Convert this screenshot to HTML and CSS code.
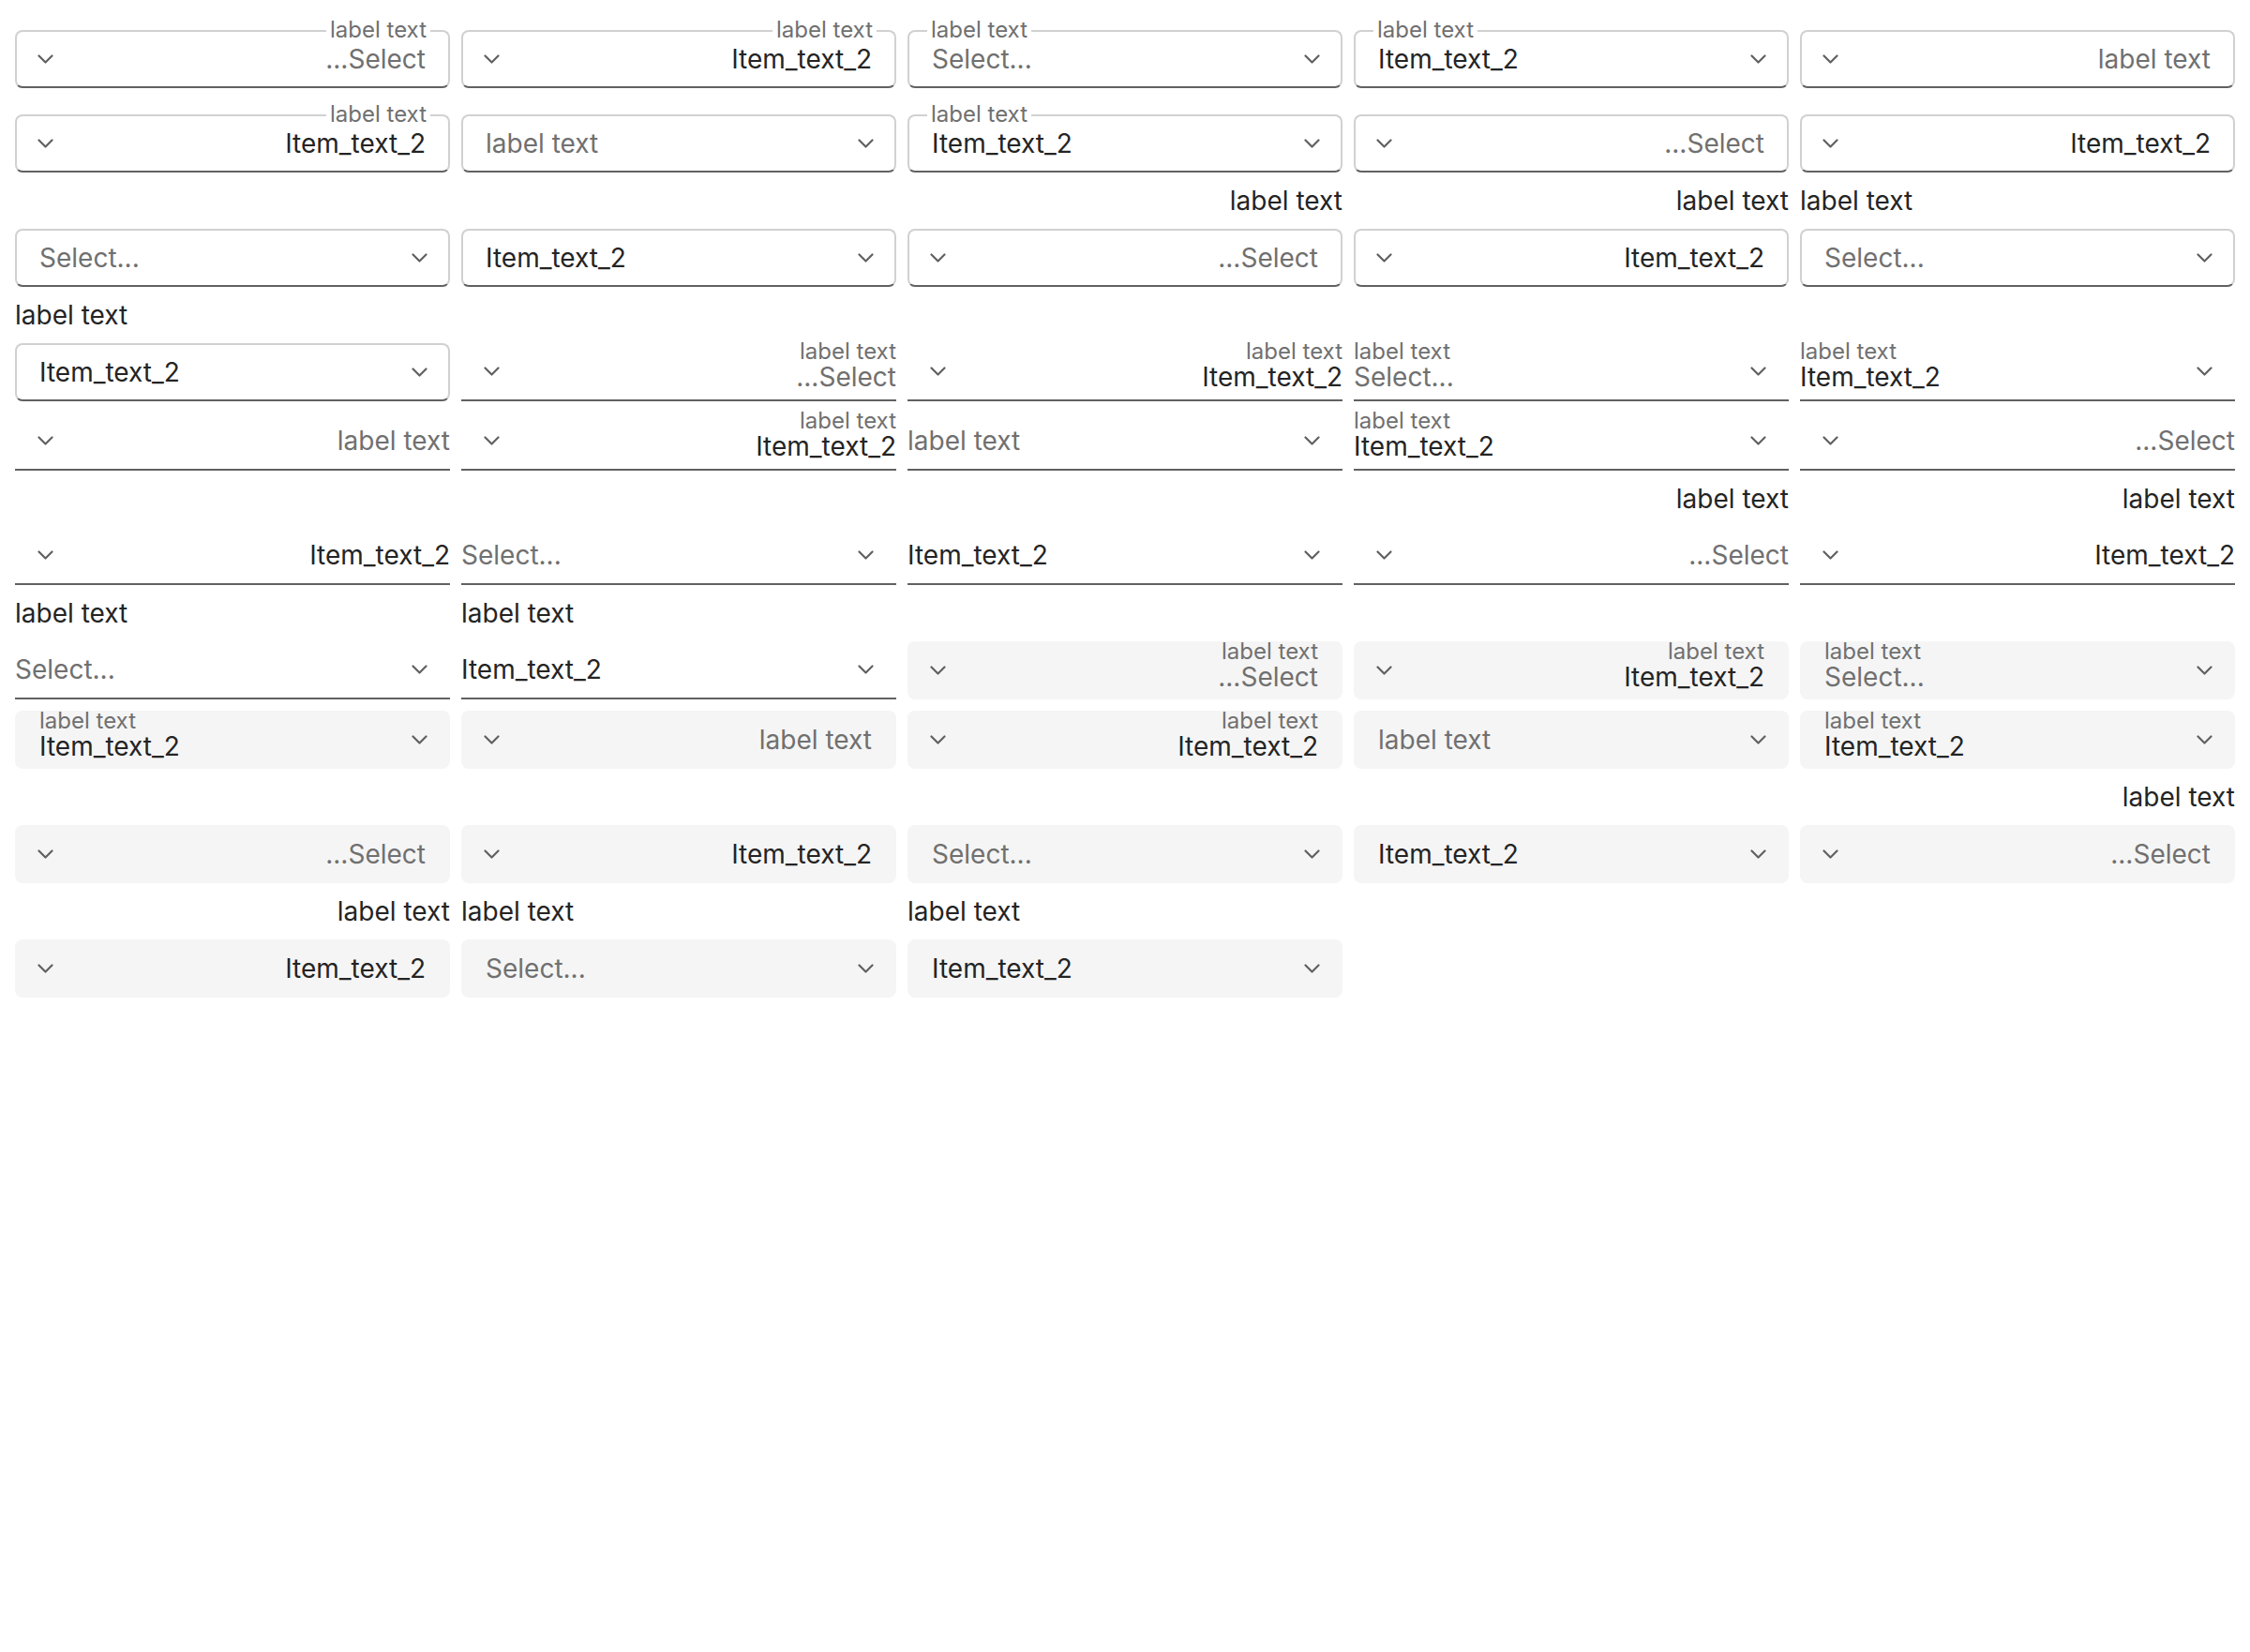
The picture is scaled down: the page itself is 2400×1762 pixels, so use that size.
FILE: index.html
```html
<!DOCTYPE html>
<html lang="en">
<head>
    <meta charset="UTF-8">
    <meta name="viewport" content="width=device-width, initial-scale=1.0">
    <title>Dropdown variants</title>
    <link rel="stylesheet" href="styles.css">
</head>
<body>
    <div class="grid">
        <!-- outline -->
        <div class="field rtl notched">
            <div class="dropdown outline">
                <span class="legend">label text</span>
                <span class="value placeholder">Select...</span>
                <svg class="chevron" width="17" height="10" viewBox="0 0 17 10"><path d="M1.5 1.5l7 7 7-7"/></svg>
            </div>
        </div>
        <div class="field rtl notched">
            <div class="dropdown outline">
                <span class="legend">label text</span>
                <span class="value">Item_text_2</span>
                <svg class="chevron" width="17" height="10" viewBox="0 0 17 10"><path d="M1.5 1.5l7 7 7-7"/></svg>
            </div>
        </div>
        <div class="field notched">
            <div class="dropdown outline">
                <span class="legend">label text</span>
                <span class="value placeholder">Select...</span>
                <svg class="chevron" width="17" height="10" viewBox="0 0 17 10"><path d="M1.5 1.5l7 7 7-7"/></svg>
            </div>
        </div>
        <div class="field notched">
            <div class="dropdown outline">
                <span class="legend">label text</span>
                <span class="value">Item_text_2</span>
                <svg class="chevron" width="17" height="10" viewBox="0 0 17 10"><path d="M1.5 1.5l7 7 7-7"/></svg>
            </div>
        </div>
        <div class="field rtl">
            <div class="dropdown outline">
                <span class="value placeholder">label text</span>
                <svg class="chevron" width="17" height="10" viewBox="0 0 17 10"><path d="M1.5 1.5l7 7 7-7"/></svg>
            </div>
        </div>
        <div class="field rtl notched">
            <div class="dropdown outline">
                <span class="legend">label text</span>
                <span class="value">Item_text_2</span>
                <svg class="chevron" width="17" height="10" viewBox="0 0 17 10"><path d="M1.5 1.5l7 7 7-7"/></svg>
            </div>
        </div>
        <div class="field">
            <div class="dropdown outline">
                <span class="value placeholder">label text</span>
                <svg class="chevron" width="17" height="10" viewBox="0 0 17 10"><path d="M1.5 1.5l7 7 7-7"/></svg>
            </div>
        </div>
        <div class="field notched">
            <div class="dropdown outline">
                <span class="legend">label text</span>
                <span class="value">Item_text_2</span>
                <svg class="chevron" width="17" height="10" viewBox="0 0 17 10"><path d="M1.5 1.5l7 7 7-7"/></svg>
            </div>
        </div>
        <div class="field rtl">
            <div class="dropdown outline">
                <span class="value placeholder">Select...</span>
                <svg class="chevron" width="17" height="10" viewBox="0 0 17 10"><path d="M1.5 1.5l7 7 7-7"/></svg>
            </div>
        </div>
        <div class="field rtl">
            <div class="dropdown outline">
                <span class="value">Item_text_2</span>
                <svg class="chevron" width="17" height="10" viewBox="0 0 17 10"><path d="M1.5 1.5l7 7 7-7"/></svg>
            </div>
        </div>
        <div class="field">
            <div class="dropdown outline">
                <span class="value placeholder">Select...</span>
                <svg class="chevron" width="17" height="10" viewBox="0 0 17 10"><path d="M1.5 1.5l7 7 7-7"/></svg>
            </div>
        </div>
        <div class="field">
            <div class="dropdown outline">
                <span class="value">Item_text_2</span>
                <svg class="chevron" width="17" height="10" viewBox="0 0 17 10"><path d="M1.5 1.5l7 7 7-7"/></svg>
            </div>
        </div>
        <div class="field rtl">
            <label class="top_label">label text</label>
            <div class="dropdown outline">
                <span class="value placeholder">Select...</span>
                <svg class="chevron" width="17" height="10" viewBox="0 0 17 10"><path d="M1.5 1.5l7 7 7-7"/></svg>
            </div>
        </div>
        <div class="field rtl">
            <label class="top_label">label text</label>
            <div class="dropdown outline">
                <span class="value">Item_text_2</span>
                <svg class="chevron" width="17" height="10" viewBox="0 0 17 10"><path d="M1.5 1.5l7 7 7-7"/></svg>
            </div>
        </div>
        <div class="field">
            <label class="top_label">label text</label>
            <div class="dropdown outline">
                <span class="value placeholder">Select...</span>
                <svg class="chevron" width="17" height="10" viewBox="0 0 17 10"><path d="M1.5 1.5l7 7 7-7"/></svg>
            </div>
        </div>
        <div class="field">
            <label class="top_label">label text</label>
            <div class="dropdown outline">
                <span class="value">Item_text_2</span>
                <svg class="chevron" width="17" height="10" viewBox="0 0 17 10"><path d="M1.5 1.5l7 7 7-7"/></svg>
            </div>
        </div>

        <!-- underline -->
        <div class="field rtl">
            <div class="dropdown underline">
                <span class="stack"><span class="stack_label">label text</span><span class="value placeholder">Select...</span></span>
                <svg class="chevron" width="17" height="10" viewBox="0 0 17 10"><path d="M1.5 1.5l7 7 7-7"/></svg>
            </div>
        </div>
        <div class="field rtl">
            <div class="dropdown underline">
                <span class="stack"><span class="stack_label">label text</span><span class="value">Item_text_2</span></span>
                <svg class="chevron" width="17" height="10" viewBox="0 0 17 10"><path d="M1.5 1.5l7 7 7-7"/></svg>
            </div>
        </div>
        <div class="field">
            <div class="dropdown underline">
                <span class="stack"><span class="stack_label">label text</span><span class="value placeholder">Select...</span></span>
                <svg class="chevron" width="17" height="10" viewBox="0 0 17 10"><path d="M1.5 1.5l7 7 7-7"/></svg>
            </div>
        </div>
        <div class="field">
            <div class="dropdown underline">
                <span class="stack"><span class="stack_label">label text</span><span class="value">Item_text_2</span></span>
                <svg class="chevron" width="17" height="10" viewBox="0 0 17 10"><path d="M1.5 1.5l7 7 7-7"/></svg>
            </div>
        </div>
        <div class="field rtl">
            <div class="dropdown underline">
                <span class="value placeholder">label text</span>
                <svg class="chevron" width="17" height="10" viewBox="0 0 17 10"><path d="M1.5 1.5l7 7 7-7"/></svg>
            </div>
        </div>
        <div class="field rtl">
            <div class="dropdown underline">
                <span class="stack"><span class="stack_label">label text</span><span class="value">Item_text_2</span></span>
                <svg class="chevron" width="17" height="10" viewBox="0 0 17 10"><path d="M1.5 1.5l7 7 7-7"/></svg>
            </div>
        </div>
        <div class="field">
            <div class="dropdown underline">
                <span class="value placeholder">label text</span>
                <svg class="chevron" width="17" height="10" viewBox="0 0 17 10"><path d="M1.5 1.5l7 7 7-7"/></svg>
            </div>
        </div>
        <div class="field">
            <div class="dropdown underline">
                <span class="stack"><span class="stack_label">label text</span><span class="value">Item_text_2</span></span>
                <svg class="chevron" width="17" height="10" viewBox="0 0 17 10"><path d="M1.5 1.5l7 7 7-7"/></svg>
            </div>
        </div>
        <div class="field rtl">
            <div class="dropdown underline">
                <span class="value placeholder">Select...</span>
                <svg class="chevron" width="17" height="10" viewBox="0 0 17 10"><path d="M1.5 1.5l7 7 7-7"/></svg>
            </div>
        </div>
        <div class="field rtl">
            <div class="dropdown underline">
                <span class="value">Item_text_2</span>
                <svg class="chevron" width="17" height="10" viewBox="0 0 17 10"><path d="M1.5 1.5l7 7 7-7"/></svg>
            </div>
        </div>
        <div class="field">
            <div class="dropdown underline">
                <span class="value placeholder">Select...</span>
                <svg class="chevron" width="17" height="10" viewBox="0 0 17 10"><path d="M1.5 1.5l7 7 7-7"/></svg>
            </div>
        </div>
        <div class="field">
            <div class="dropdown underline">
                <span class="value">Item_text_2</span>
                <svg class="chevron" width="17" height="10" viewBox="0 0 17 10"><path d="M1.5 1.5l7 7 7-7"/></svg>
            </div>
        </div>
        <div class="field rtl">
            <label class="top_label">label text</label>
            <div class="dropdown underline">
                <span class="value placeholder">Select...</span>
                <svg class="chevron" width="17" height="10" viewBox="0 0 17 10"><path d="M1.5 1.5l7 7 7-7"/></svg>
            </div>
        </div>
        <div class="field rtl">
            <label class="top_label">label text</label>
            <div class="dropdown underline">
                <span class="value">Item_text_2</span>
                <svg class="chevron" width="17" height="10" viewBox="0 0 17 10"><path d="M1.5 1.5l7 7 7-7"/></svg>
            </div>
        </div>
        <div class="field">
            <label class="top_label">label text</label>
            <div class="dropdown underline">
                <span class="value placeholder">Select...</span>
                <svg class="chevron" width="17" height="10" viewBox="0 0 17 10"><path d="M1.5 1.5l7 7 7-7"/></svg>
            </div>
        </div>
        <div class="field">
            <label class="top_label">label text</label>
            <div class="dropdown underline">
                <span class="value">Item_text_2</span>
                <svg class="chevron" width="17" height="10" viewBox="0 0 17 10"><path d="M1.5 1.5l7 7 7-7"/></svg>
            </div>
        </div>

        <!-- filled -->
        <div class="field rtl">
            <div class="dropdown filled">
                <span class="stack"><span class="stack_label">label text</span><span class="value placeholder">Select...</span></span>
                <svg class="chevron" width="17" height="10" viewBox="0 0 17 10"><path d="M1.5 1.5l7 7 7-7"/></svg>
            </div>
        </div>
        <div class="field rtl">
            <div class="dropdown filled">
                <span class="stack"><span class="stack_label">label text</span><span class="value">Item_text_2</span></span>
                <svg class="chevron" width="17" height="10" viewBox="0 0 17 10"><path d="M1.5 1.5l7 7 7-7"/></svg>
            </div>
        </div>
        <div class="field">
            <div class="dropdown filled">
                <span class="stack"><span class="stack_label">label text</span><span class="value placeholder">Select...</span></span>
                <svg class="chevron" width="17" height="10" viewBox="0 0 17 10"><path d="M1.5 1.5l7 7 7-7"/></svg>
            </div>
        </div>
        <div class="field">
            <div class="dropdown filled">
                <span class="stack"><span class="stack_label">label text</span><span class="value">Item_text_2</span></span>
                <svg class="chevron" width="17" height="10" viewBox="0 0 17 10"><path d="M1.5 1.5l7 7 7-7"/></svg>
            </div>
        </div>
        <div class="field rtl">
            <div class="dropdown filled">
                <span class="value placeholder">label text</span>
                <svg class="chevron" width="17" height="10" viewBox="0 0 17 10"><path d="M1.5 1.5l7 7 7-7"/></svg>
            </div>
        </div>
        <div class="field rtl">
            <div class="dropdown filled">
                <span class="stack"><span class="stack_label">label text</span><span class="value">Item_text_2</span></span>
                <svg class="chevron" width="17" height="10" viewBox="0 0 17 10"><path d="M1.5 1.5l7 7 7-7"/></svg>
            </div>
        </div>
        <div class="field">
            <div class="dropdown filled">
                <span class="value placeholder">label text</span>
                <svg class="chevron" width="17" height="10" viewBox="0 0 17 10"><path d="M1.5 1.5l7 7 7-7"/></svg>
            </div>
        </div>
        <div class="field">
            <div class="dropdown filled">
                <span class="stack"><span class="stack_label">label text</span><span class="value">Item_text_2</span></span>
                <svg class="chevron" width="17" height="10" viewBox="0 0 17 10"><path d="M1.5 1.5l7 7 7-7"/></svg>
            </div>
        </div>
        <div class="field rtl">
            <div class="dropdown filled">
                <span class="value placeholder">Select...</span>
                <svg class="chevron" width="17" height="10" viewBox="0 0 17 10"><path d="M1.5 1.5l7 7 7-7"/></svg>
            </div>
        </div>
        <div class="field rtl">
            <div class="dropdown filled">
                <span class="value">Item_text_2</span>
                <svg class="chevron" width="17" height="10" viewBox="0 0 17 10"><path d="M1.5 1.5l7 7 7-7"/></svg>
            </div>
        </div>
        <div class="field">
            <div class="dropdown filled">
                <span class="value placeholder">Select...</span>
                <svg class="chevron" width="17" height="10" viewBox="0 0 17 10"><path d="M1.5 1.5l7 7 7-7"/></svg>
            </div>
        </div>
        <div class="field">
            <div class="dropdown filled">
                <span class="value">Item_text_2</span>
                <svg class="chevron" width="17" height="10" viewBox="0 0 17 10"><path d="M1.5 1.5l7 7 7-7"/></svg>
            </div>
        </div>
        <div class="field rtl">
            <label class="top_label">label text</label>
            <div class="dropdown filled">
                <span class="value placeholder">Select...</span>
                <svg class="chevron" width="17" height="10" viewBox="0 0 17 10"><path d="M1.5 1.5l7 7 7-7"/></svg>
            </div>
        </div>
        <div class="field rtl">
            <label class="top_label">label text</label>
            <div class="dropdown filled">
                <span class="value">Item_text_2</span>
                <svg class="chevron" width="17" height="10" viewBox="0 0 17 10"><path d="M1.5 1.5l7 7 7-7"/></svg>
            </div>
        </div>
        <div class="field">
            <label class="top_label">label text</label>
            <div class="dropdown filled">
                <span class="value placeholder">Select...</span>
                <svg class="chevron" width="17" height="10" viewBox="0 0 17 10"><path d="M1.5 1.5l7 7 7-7"/></svg>
            </div>
        </div>
        <div class="field">
            <label class="top_label">label text</label>
            <div class="dropdown filled">
                <span class="value">Item_text_2</span>
                <svg class="chevron" width="17" height="10" viewBox="0 0 17 10"><path d="M1.5 1.5l7 7 7-7"/></svg>
            </div>
        </div>
    </div>
</body>
</html>
```

FILE: styles.css
```css
body {
    margin: 0;
    padding: 16px;
    background-color: #ffffff;
    color: #242424;
    font-family: Inter, "Noto Sans", sans-serif;
}

.grid {
    display: grid;
    grid-template-columns: repeat(5, 1fr);
    gap: 12px;
    align-items: end;
}

.field {
    display: flex;
    flex-direction: column;
    min-width: 0;
}

.field.rtl {
    direction: rtl;
}

.field.notched {
    padding-top: 16px;
}

.top_label {
    font-size: 28px;
    line-height: 36px;
    margin-bottom: 12px;
    color: #242424;
}

.dropdown {
    position: relative;
    display: flex;
    align-items: center;
    height: 62px;
    box-sizing: border-box;
    padding-inline-start: 24px;
    padding-inline-end: 22px;
    border: 2px solid transparent;
    border-radius: 8px;
}

.outline {
    border-color: #d1d1d1;
    border-bottom-color: #616161;
}

.filled {
    background-color: #f5f5f5;
}

.underline {
    border-width: 0 0 2px 0;
    border-bottom-color: #616161;
    border-radius: 0;
    padding-inline-start: 0;
    padding-inline-end: 24px;
}

.value {
    flex: 1;
    font-size: 28px;
    line-height: 36px;
    white-space: nowrap;
    color: #242424;
}

.placeholder {
    color: #707070;
}

.legend {
    position: absolute;
    top: -18px;
    inset-inline-start: 19px;
    padding: 0 4px;
    font-size: 24px;
    line-height: 32px;
    color: #707070;
    background-color: #ffffff;
}

.stack {
    flex: 1;
    align-self: flex-start;
    display: flex;
    flex-direction: column;
}

.stack_label {
    font-size: 24px;
    line-height: 20px;
    color: #707070;
}

.stack .value {
    flex: none;
    line-height: 35px;
}

.filled .stack {
    margin-top: -1px;
}

.underline .stack {
    margin-top: -1px;
}

.chevron {
    flex: none;
}

.chevron path {
    fill: none;
    stroke: #616161;
    stroke-width: 2.2;
    stroke-linecap: round;
    stroke-linejoin: round;
}
```
